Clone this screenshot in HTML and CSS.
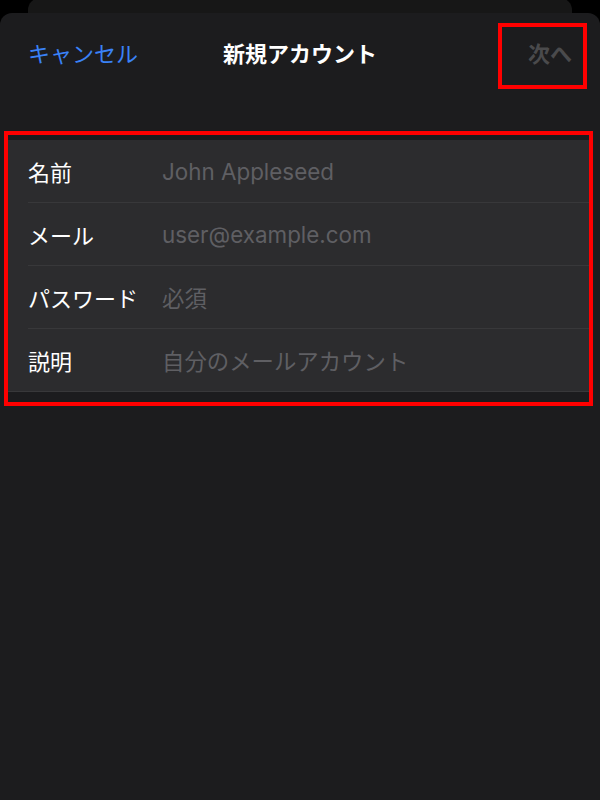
FILE: index.html
```html
<!DOCTYPE html>
<html lang="ja">
<head>
<meta charset="utf-8">
<title>新規アカウント</title>
<link rel="stylesheet" href="styles.css">
</head>
<body>
<div class="back-card"></div>
<div class="sheet">
  <div class="nav">
    <span class="nav-cancel">キャンセル</span>
    <span class="nav-title">新規アカウント</span>
    <span class="nav-next">次へ</span>
  </div>
  <div class="group">
    <div class="row"><div class="row-inner"><span class="label">名前</span><span class="placeholder">John Appleseed</span></div></div>
    <div class="row"><div class="row-inner"><span class="label">メール</span><span class="placeholder">user@example.com</span></div></div>
    <div class="row"><div class="row-inner"><span class="label">パスワード</span><span class="placeholder">必須</span></div></div>
    <div class="row last"><div class="row-inner"><span class="label">説明</span><span class="placeholder">自分のメールアカウント</span></div></div>
  </div>
</div>
<div class="mark mark-next"></div>
<div class="mark mark-form"></div>
</body>
</html>
```
FILE: styles.css
```css
html, body {
  margin: 0;
  padding: 0;
  background: #000;
}
body {
  position: relative;
  width: 600px;
  height: 800px;
  overflow: hidden;
  font-family: Inter, "Noto Sans CJK JP", sans-serif;
}
.back-card {
  height: 15px;
  margin: -2px 28px 0;
  background: #171717;
  border-radius: 12px 12px 0 0;
}
.sheet {
  background: #1c1c1e;
  border-radius: 12px 12px 0 0;
  height: 800px;
}
.nav {
  height: 78px;
  display: grid;
  grid-template-columns: 1fr auto 1fr;
  align-items: center;
  padding: 0 28px;
  font-size: 22px;
  font-family: "Noto Sans CJK JP", sans-serif;
}
.nav-cancel {
  color: #3a82f7;
  justify-self: start;
}
.nav-title {
  color: #fff;
  font-weight: 700;
}
.nav-next {
  color: #4a4a4c;
  font-weight: 700;
  justify-self: end;
}
.group {
  margin: 49px 10px 0 8px;
  background: #2c2c2e;
  border-bottom: 1px solid #38383a;
}
.row {
  padding-left: 20px;
}
.row-inner {
  height: 62px;
  display: flex;
  align-items: center;
  border-bottom: 1px solid #38383a;
  font-size: 22px;
}
.row.last .row-inner {
  border-bottom: none;
}
.label {
  width: 134px;
  color: #fff;
  font-family: "Noto Sans CJK JP", sans-serif;
}
.placeholder {
  color: #5f5f63;
  font-size: 22.4px;
}
.mark {
  position: absolute;
  border: 4px solid #ff0000;
  box-sizing: border-box;
}
.mark-next {
  left: 498px;
  top: 23px;
  width: 89px;
  height: 66px;
}
.mark-form {
  left: 4px;
  top: 131px;
  width: 589px;
  height: 275px;
}
```
